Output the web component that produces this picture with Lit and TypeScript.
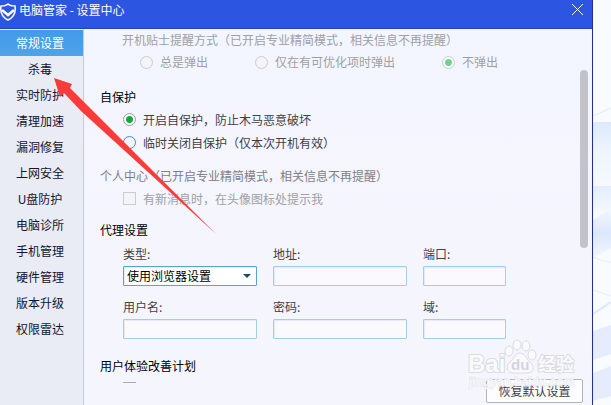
import { LitElement, html, css, svg } from "lit";
import { customElement, state } from "lit/decorators.js";
import { classMap } from "lit/directives/class-map.js";

const SECTIONS = [
  "常规设置", "杀毒", "实时防护", "清理加速", "漏洞修复", "上网安全",
  "U盘防护", "电脑诊所", "手机管理", "硬件管理", "版本升级", "权限雷达",
];

@customElement("app-root")
export class AppRoot extends LitElement {
  @state() private current = 0;

  static styles = css`
    :host {
      display: grid;
      grid-template-columns: minmax(0, 1fr) 18px;
      height: 100vh;
      position: relative;
      overflow: hidden;
      font: 12px/22px "Noto Sans CJK SC", sans-serif;
      color: #404048;
    }
    * { box-sizing: border-box; }
    button, input, select { font: inherit; color: inherit; margin: 0; }
    .window {
      display: flex;
      flex-direction: column;
      min-height: 0;
      border-right: 1px solid #1f31a0;
      position: relative;
      background: linear-gradient(#f2f6ff, #f5f5fe 50%);
    }
    .title {
      flex: none;
      display: flex;
      align-items: flex-start;
      height: 29px;
      background: #2c55e2;
      border-bottom: 1px solid #2143b8;
      color: #fff;
    }
    .title h1 {
      flex: 1;
      margin: 0 0 0 2px;
      font-size: 12px;
      font-weight: 400;
      line-height: 20px;
    }
    .logo { width: 17px; height: 18px; margin-top: 3px; }
    .close {
      width: 20px;
      height: 20px;
      margin-right: 4px;
      padding: 0;
      border: 0;
      background: none;
    }
    .close svg { display: block; }
    .body { flex: 1; display: flex; min-height: 0; }
    nav {
      flex: none;
      width: 84px;
      padding-top: 1px;
      background: #e9ebf5;
      border-right: 1px solid #c9cad2;
    }
    .tab {
      display: block;
      width: 100%;
      height: 26px;
      padding: 0 3px 0 0;
      border: 0;
      background: none;
      color: #14142c;
      line-height: 24px;
      text-align: center;
    }
    .tab.on { background: linear-gradient(#429aec, #4fa3e6); color: #fff; }
    .main { flex: 1; display: flex; flex-direction: column; min-width: 0; }
    .scroll { flex: 1; min-height: 0; overflow: hidden; padding-left: 16px; }
    .foot { flex: none; height: 22px; }
    .thumb {
      position: absolute;
      right: 4px;
      top: 70px;
      width: 8px;
      height: 44%;
      border-radius: 4px;
      background: #c2c2cb;
    }
    fieldset { border: 0; margin: 0; padding: 0; min-width: 0; line-height: 23px; }
    legend {
      display: block;
      padding: 0;
      color: #000;
    }
    .tips { padding-left: 22px; line-height: 22px; margin-bottom: 12px; }
    .tips legend, .muted { color: #a0a0a4; }
    .account legend { color: #808084; }
    .protect { margin-bottom: 10px; }
    .account { margin-bottom: 8px; }
    .proxy { margin-bottom: 15px; }
    .inset { padding-left: 23px; }
    .choices { display: flex; gap: 47px; padding-left: 18px; }
    .check { display: flex; align-items: center; gap: 7px; white-space: nowrap; }
    .check input {
      appearance: none;
      flex: none;
      width: 13px;
      height: 13px;
      border: 1px solid #a9a9ad;
      background: #f4f4f8;
    }
    .check input[type="radio"] { border-radius: 50%; border-color: #9c9ca0; }
    .check input[type="radio"]:checked {
      background: radial-gradient(circle, #06ad3c 3px, #fff 4px);
    }
    .check input[type="radio"].hot { border-color: #3b8fd0; }
    .check input:disabled, .check input[type="radio"]:disabled { border-color: #ccccd0; }
    .check input[type="radio"]:disabled:checked {
      background: radial-gradient(circle, #74cf96 3px, #fafafc 4px);
    }
    .fields {
      display: grid;
      grid-template-columns: 134px 134px 83px;
      column-gap: 16px;
      row-gap: 9px;
      padding: 1px 0 0 23px;
    }
    .field { display: flex; flex-direction: column; line-height: 24px; }
    .field input, .field select {
      appearance: none;
      width: 100%;
      height: 20px;
      padding: 0 3px;
      border: 1px solid #a3cdea;
      border-radius: 1px;
      background: #f9f9fe;
      box-shadow: inset 1px 1px 1px #dfebf7;
      line-height: 18px;
    }
    .pick { display: grid; }
    .pick > * { grid-area: 1 / 1; }
    .field .pick select { border-color: #55a5d5; background: #fff; color: #000; }
    .pick svg { justify-self: end; align-self: center; margin-right: 6px; pointer-events: none; }
    .reset {
      position: absolute;
      right: 9px;
      bottom: 2px;
      width: 97px;
      height: 24px;
      padding: 0;
      border: 1px solid #b4b4b8;
      border-radius: 2px;
      background: #fdfdfe;
      line-height: 20px;
      color: #404048;
    }
    .desk { width: 100%; height: 100%; display: block; }
    .mark {
      position: absolute;
      right: 31px;
      bottom: 12px;
      pointer-events: none;
    }
    .mark text { paint-order: stroke; }
    .arrow { position: absolute; left: 50px; top: 74px; pointer-events: none; }
  `;

  private field(id: string, label: string) {
    return html`<div class="field">
      <label for=${id}>${label}:</label><input id=${id} type="text" />
    </div>`;
  }

  private watermark() {
    const paw = svg`
      <ellipse cx="41" cy="12" rx="4" ry="5" />
      <ellipse cx="49" cy="6" rx="4" ry="5" />
      <ellipse cx="58" cy="7" rx="4" ry="5" />
      <ellipse cx="64" cy="16" rx="4" ry="5" />
      <path d="M52 14 C47 14 46 20 42 23 C37 27 39 34 45 34 L59 34 C66 34 67 27 62 23 C58 20 57 14 52 14Z" />`;
    return html`<svg class="mark" width="112" height="54" viewBox="0 0 112 54">
      <g fill="#fafafd" stroke="#dadae1" stroke-width="1">
        ${paw}
        <g font-family="Liberation Sans, sans-serif" font-weight="700">
          <text x="0" y="33" font-size="24" stroke-width="2">Bai</text>
          <text x="43" y="31" font-size="15" fill="#d4d4e0" stroke="none">du</text>
          <text x="1" y="47" font-size="12" fill-opacity=".8" stroke="#dedee4" stroke-opacity=".8">jingyan.baidu.com</text>
        </g>
        <text x="70" y="32" font-size="18" font-weight="700" font-family="Noto Sans CJK SC, sans-serif" stroke-width="2">经验</text>
      </g>
    </svg>`;
  }

  render() {
    return html`
      <section class="window">
        <header class="title">
          <svg class="logo" viewBox="0 0 17 18" fill="none" stroke="#fff">
            <path d="M8 1 C6 3 3 3 1 3 C0 9 2 14 8 17 C14 14 16 9 15 3 C13 3 10 3 8 1Z" stroke-width="1.5" />
            <path d="M2 7 L8 12 L14 7" stroke-width="2.5" />
          </svg>
          <h1>电脑管家 - 设置中心</h1>
          <button class="close" aria-label="关闭">
            <svg width="20" height="20" stroke="#fff"><path d="M4 4 L15 15 M15 4 L4 15" /></svg>
          </button>
        </header>
        <div class="body">
          <nav>
            ${SECTIONS.map((name, i) => html`<button
              class=${classMap({ tab: true, on: i === this.current })}
              @click=${() => (this.current = i)}>${name}</button>`)}
          </nav>
          <div class="main">
            <div class="scroll">
              <fieldset class="tips" disabled>
                <legend>开机贴士提醒方式（已开启专业精简模式，相关信息不再提醒）</legend>
                <div class="choices">
                  <label class="check muted"><input type="radio" name="tips" />总是弹出</label>
                  <label class="check muted"><input type="radio" name="tips" />仅在有可优化项时弹出</label>
                  <label class="check muted"><input type="radio" name="tips" checked />不弹出</label>
                </div>
              </fieldset>
              <fieldset class="protect">
                <legend>自保护</legend>
                <div class="inset">
                  <label class="check"><input type="radio" name="guard" checked />开启自保护，防止木马恶意破坏</label>
                  <label class="check"><input class="hot" type="radio" name="guard" />临时关闭自保护（仅本次开机有效）</label>
                </div>
              </fieldset>
              <fieldset class="account" disabled>
                <legend>个人中心（已开启专业精简模式，相关信息不再提醒）</legend>
                <div class="inset">
                  <label class="check muted"><input type="checkbox" />有新消息时，在头像图标处提示我</label>
                </div>
              </fieldset>
              <fieldset class="proxy">
                <legend>代理设置</legend>
                <div class="fields">
                  <div class="field">
                    <label for="kind">类型:</label>
                    <div class="pick">
                      <select id="kind"><option>使用浏览器设置</option></select>
                      <svg width="8" height="5"><path d="M0 0 H8 L4 4Z" fill="#15505f" /></svg>
                    </div>
                  </div>
                  ${this.field("host", "地址")} ${this.field("port", "端口")}
                  ${this.field("user", "用户名")}
                  <div class="field">
                    <label for="pass">密码:</label><input id="pass" type="password" />
                  </div>
                  ${this.field("domain", "域")}
                </div>
              </fieldset>
              <fieldset>
                <legend>用户体验改善计划</legend>
                <div class="inset">
                  <div class="check"><input type="checkbox" aria-label="用户体验改善计划" />&nbsp;</div>
                </div>
              </fieldset>
            </div>
            <div class="foot"></div>
          </div>
        </div>
        <div class="thumb"></div>
        <button class="reset">恢复默认设置</button>
      </section>
      <svg class="desk" viewBox="0 0 18 405" preserveAspectRatio="none">
        <defs>
          <linearGradient id="haze" x2="0" y2="1">
            <stop stop-color="#dce9fd" /><stop offset=".5" stop-color="#f0f6ff" /><stop offset="1" stop-color="#f6faff" />
          </linearGradient>
          <linearGradient id="glow" x2="0" y2="1">
            <stop stop-color="#e3edfd" /><stop offset="1" stop-color="#f8fbff" />
          </linearGradient>
          <linearGradient id="wave" x2="0" y2="1">
            <stop stop-color="#f4f8ff" /><stop offset=".5" stop-color="#dbe7fd" /><stop offset="1" stop-color="#f2f7ff" />
          </linearGradient>
        </defs>
        <rect width="18" height="405" fill="#f8fbff" />
        <path d="M0 116 L18 108" stroke="#dbe9fb" />
        <rect y="122" width="18" height="64" fill="url(#haze)" />
        <rect y="186" width="18" height="30" fill="url(#glow)" />
        <path d="M0 220 L18 208 V248 L0 258Z" fill="url(#wave)" />
        <path d="M0 257 Q10 262 18 262 M0 290 L18 296" stroke="#e3edfd" fill="none" />
        <path d="M0 314 L18 302" stroke="#dce8fd" stroke-width="2" />
        <path d="M0 331 L18 325 V354 L0 360Z M0 373 L18 366 V396 L0 401Z" fill="#e5ecfe" />
      </svg>
      ${this.watermark()}
      <svg class="arrow" width="170" height="164">
        <path d="M4 4 L22 10 L20 14 L42 36 L166 160 L31 37 L14 19 L10 23Z" fill="#f93c3a" />
      </svg>
    `;
  }
}
